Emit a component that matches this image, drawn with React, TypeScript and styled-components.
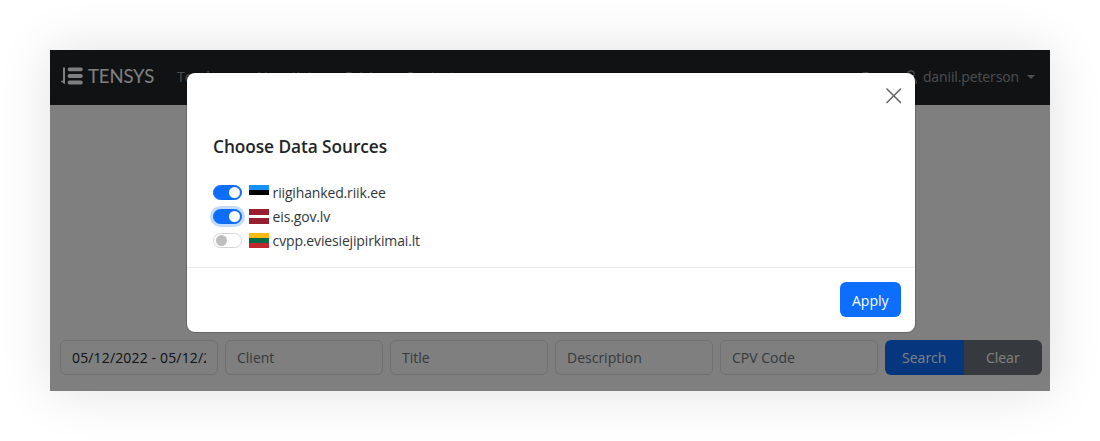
import React, { useState } from "react";
import styled, { createGlobalStyle, css } from "styled-components";

const GlobalStyle = createGlobalStyle`
  *, *::before, *::after { box-sizing: border-box; }
  body {
    margin: 0;
    background: #fff;
    color: #212529;
    font-family: "Open Sans", "Noto Sans", sans-serif;
    font-size: 14px;
    line-height: 22px;
    overflow: hidden;
  }
  button, input { font: inherit; letter-spacing: inherit; }
`;

const Stage = styled.main`
  height: 441px;
  padding: 50px;
`;

const Screen = styled.div`
  position: relative;
  display: flex;
  flex-direction: column;
  width: 1000px;
  height: 341px;
  background: #fff;
  box-shadow: 0 0 50px rgba(0, 0, 0, 0.12);
`;

const Navbar = styled.header`
  display: flex;
  align-items: center;
  flex: none;
  height: 55px;
  padding: 0 15px 4px 11px;
  background: #212529;
  color: rgba(255, 255, 255, 0.55);
`;

const Brand = styled.div`
  display: flex;
  align-items: center;
  gap: 5px;
  width: 116px;
  color: #fff;
  font-family: Lato, sans-serif;
  font-size: 18.5px;
  letter-spacing: -0.1px;
`;

const NavLinks = styled.nav`
  display: flex;
  flex: 1;
  padding-top: 2px;
`;

const NavLink = styled.a<{ $width: number }>`
  width: ${(p) => p.$width}px;
`;

const Account = styled.div`
  display: flex;
  align-items: center;
  padding-top: 3px;
`;

const Language = styled.span`
  margin-right: 26px;
`;

const UserName = styled.span`
  margin: 0 8px 0 5px;
  letter-spacing: -0.12px;
`;

const Caret = styled.span`
  border: 4.5px solid transparent;
  border-top-color: currentColor;
  border-bottom: 0;
  margin-bottom: 1px;
`;

const Filters = styled.form`
  display: flex;
  gap: 7px;
  margin-top: auto;
  padding: 0 8px 16.5px 10px;
`;

const Field = styled.input`
  width: 158px;
  height: 35px;
  padding: 1px 11px 0;
  border: 1px solid #dfe1e3;
  border-radius: 6px;
  background: #fff;
  color: #212529;
  outline: 0;
  &::placeholder { color: #6c757d; opacity: 1; }
`;

const DateField = styled(Field)`
  letter-spacing: 0.15px;
`;

const ButtonGroup = styled.div`
  display: flex;
  flex: 1;
  border-radius: 6px;
  overflow: hidden;
`;

const Button = styled.button<{ $tone?: "secondary" }>`
  flex: 1;
  height: 35px;
  padding: 1px 0 0;
  border: 0;
  background: ${(p) => (p.$tone === "secondary" ? "#6c757d" : "#0d6efd")};
  color: #fff;
`;

const Backdrop = styled.div`
  position: absolute;
  inset: 0;
  display: flex;
  align-items: flex-start;
  padding: 23px 0 0 137px;
  background: rgba(0, 0, 0, 0.5);
`;

const Dialog = styled.section`
  display: flex;
  flex-direction: column;
  width: 728.4px;
  height: 259.4px;
  border-radius: 8px;
  background: #fff;
  box-shadow: 0 0 0 1px rgba(0, 0, 0, 0.18);
`;

const DialogHeader = styled.div`
  display: flex;
  justify-content: flex-end;
  height: 61px;
  padding: 15px 13.4px 0 0;
`;

const CloseButton = styled.button`
  width: 16px;
  height: 16px;
  padding: 0;
  border: 0;
  background: none;
  svg { display: block; }
`;

const DialogBody = styled.div`
  flex: 1;
  padding: 0 26px;
`;

const Heading = styled.h2`
  margin: 0 0 21px;
  font-size: 17.3px;
  font-weight: 600;
  line-height: 25px;
  letter-spacing: -0.07px;
`;

const SourceRow = styled.label`
  display: flex;
  align-items: center;
  height: 24px;
`;

const Toggle = styled.input<{ $focused: boolean }>`
  appearance: none;
  display: flex;
  align-items: center;
  width: 29.4px;
  height: 15px;
  margin: 0 7px 0 0;
  padding: 0 1.5px;
  border: 1px solid #d3d6d9;
  border-radius: 8px;
  background: #fff;
  &::before {
    content: "";
    width: 11px;
    height: 11px;
    border-radius: 50%;
    background: #bfbfbf;
  }
  &:checked {
    justify-content: flex-end;
    border-color: #0d6efd;
    background: #0d6efd;
  }
  &:checked::before { background: #fff; }
  ${(p) => p.$focused && css`
    box-shadow: 0 0 0 3px #c2dbfe;
  `}
`;

const Flag = styled.span<{ $stripes: string }>`
  width: 20px;
  height: 15px;
  margin-right: 3.2px;
  background: linear-gradient(${(p) => p.$stripes});
`;

const SourceName = styled.span`
  padding-top: 2px;
  color: #33373b;
  letter-spacing: -0.15px;
`;

const DialogFooter = styled.div`
  display: flex;
  justify-content: flex-end;
  height: 65.4px;
  padding: 14.4px 14.4px 0;
  border-top: 1px solid #e9ecef;
`;

const ApplyButton = styled(Button)`
  flex: none;
  width: 61.5px;
  padding-top: 2px;
  border-radius: 6px;
`;

const sources = [
  {
    name: "riigihanked.riik.ee",
    stripes: "#1791ff 0 33.3%, #000 33.3% 66.6%, #fff 66.6%",
  },
  {
    name: "eis.gov.lv",
    stripes: "#981e32 0 40%, #fff 40% 60%, #981e32 60%",
  },
  {
    name: "cvpp.eviesiejipirkimai.lt",
    stripes: "#fdb913 0 33.3%, #006a44 33.3% 66.6%, #c1272d 66.6%",
  },
];

const links = [
  { label: "Tenders", width: 80 },
  { label: "Negotiate", width: 88 },
  { label: "Pricing", width: 60 },
  { label: "Contacts", width: 60 },
];

const fields = ["Client", "Title", "Description", "CPV Code"];

function Logo() {
  return (
    <svg width="22" height="18" viewBox="0 0 22 18" fill="#fff">
      <path d="M2 0.6h2V17.2L0 14.4V13.7H2z" />
      <rect x="6.7" y="0.4" width="15" height="3.9" rx="1.7" />
      <rect x="6.7" y="7" width="15" height="3.9" rx="1.7" />
      <rect x="6.7" y="13.6" width="15" height="3.9" rx="1.7" />
    </svg>
  );
}

function PersonIcon() {
  return (
    <svg width="14" height="14" viewBox="0 0 14 14" fill="none" stroke="currentColor" strokeWidth="1.2">
      <circle cx="7" cy="4" r="3.2" />
      <path d="M1.5 13c.2-3.5 2.2-4.5 5.5-4.5s5.3 1 5.5 4.5z" />
    </svg>
  );
}

export default function App() {
  const [enabled, setEnabled] = useState([true, true, false]);
  const toggle = (index: number) =>
    setEnabled(enabled.map((on, i) => (i === index ? !on : on)));

  return (
    <>
      <GlobalStyle />
      <Stage>
        <Screen>
          <Navbar>
            <Brand>
              <Logo />
              TENSYS
            </Brand>
            <NavLinks>
              {links.map((link) => (
                <NavLink key={link.label} $width={link.width}>{link.label}</NavLink>
              ))}
            </NavLinks>
            <Account>
              <Language>En</Language>
              <PersonIcon />
              <UserName>daniil.peterson</UserName>
              <Caret />
            </Account>
          </Navbar>
          <Filters>
            <DateField defaultValue="05/12/2022 - 05/12/2022" />
            {fields.map((name) => (
              <Field key={name} placeholder={name} />
            ))}
            <ButtonGroup>
              <Button type="button">Search</Button>
              <Button type="button" $tone="secondary">Clear</Button>
            </ButtonGroup>
          </Filters>
          <Backdrop>
            <Dialog role="dialog">
              <DialogHeader>
                <CloseButton aria-label="Close">
                  <svg width="16" height="16" viewBox="0 0 16 16" stroke="#666" strokeWidth="1.6" strokeLinecap="round">
                    <path d="M1 1l13.5 13.5M14.5 1l-13.5 13.5" />
                  </svg>
                </CloseButton>
              </DialogHeader>
              <DialogBody>
                <Heading>Choose Data Sources</Heading>
                {sources.map((source, i) => (
                  <SourceRow key={source.name}>
                    <Toggle
                      type="checkbox"
                      checked={enabled[i]}
                      onChange={() => toggle(i)}
                      $focused={i === 1}
                    />
                    <Flag $stripes={source.stripes} />
                    <SourceName>{source.name}</SourceName>
                  </SourceRow>
                ))}
              </DialogBody>
              <DialogFooter>
                <ApplyButton type="button">Apply</ApplyButton>
              </DialogFooter>
            </Dialog>
          </Backdrop>
        </Screen>
      </Stage>
    </>
  );
}
